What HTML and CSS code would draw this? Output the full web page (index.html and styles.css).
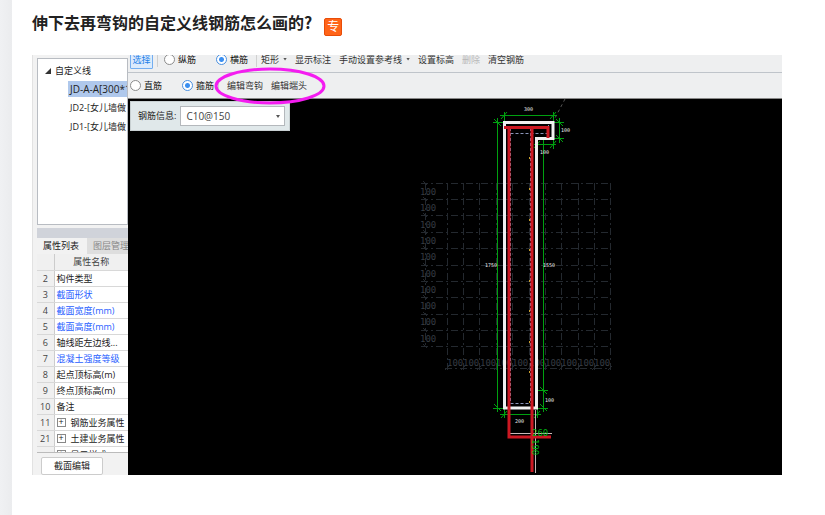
FILE: index.html
```html
<!DOCTYPE html>
<html lang="zh-CN">
<head>
<meta charset="utf-8">
<title>伸下去再弯钩的自定义线钢筋怎么画的？</title>
<link rel="stylesheet" href="styles.css">
</head>
<body>
<main class="page">
  <header class="question">
    <h1>伸下去再弯钩的自定义线钢筋怎么画的?</h1>
    <span class="badge">专</span>
  </header>
  <section class="app">
    <aside class="side">
      <div class="tree">
        <div class="tree-root"><svg class="caret" viewBox="0 0 6 6"><path d="M6 0V6H0Z"/></svg>自定义线</div>
        <ul>
          <li class="selected">JD-A-A[300*1</li>
          <li>JD2-[女儿墙做</li>
          <li>JD1-[女儿墙做</li>
        </ul>
      </div>
      <div class="band"></div>
      <div class="tabs"><button class="tab active">属性列表</button><button class="tab">图层管理</button></div>
      <div class="props">
        <table>
          <thead><tr><th></th><th>属性名称</th></tr></thead>
          <tbody>
            <tr><th>2</th><td>构件类型</td></tr>
            <tr class="blue"><th>3</th><td>截面形状</td></tr>
            <tr class="blue"><th>4</th><td>截面宽度(mm)</td></tr>
            <tr class="blue"><th>5</th><td>截面高度(mm)</td></tr>
            <tr><th>6</th><td>轴线距左边线...</td></tr>
            <tr class="blue"><th>7</th><td>混凝土强度等级</td></tr>
            <tr><th>8</th><td>起点顶标高(m)</td></tr>
            <tr><th>9</th><td>终点顶标高(m)</td></tr>
            <tr><th>10</th><td>备注</td></tr>
            <tr><th>11</th><td><span class="plus">+</span>钢筋业务属性</td></tr>
            <tr><th>21</th><td><span class="plus">+</span>土建业务属性</td></tr>
            <tr><th></th><td><span class="plus">+</span>显示样式</td></tr>
          </tbody>
        </table>
      </div>
      <div class="side-foot"><button class="edit">截面编辑</button></div>
    </aside>
    <div class="work">
      <div class="bar bar-top">
        <button class="pick">选择</button>
        <i class="sep"></i>
        <label class="first"><input type="radio" name="dir">纵筋</label>
        <label class="second"><input type="radio" name="dir" checked>横筋</label>
        <i class="sep"></i>
        <button>矩形<b class="drop"></b></button>
        <button>显示标注</button>
        <button>手动设置参考线<b class="drop"></b></button>
        <button>设置标高</button>
        <button disabled>删除</button>
        <button>清空钢筋</button>
      </div>
      <div class="bar bar-sub">
        <label><input type="radio" name="kind">直筋</label>
        <label class="second"><input type="radio" name="kind" checked>箍筋</label>
        <i class="sep"></i>
        <button>编辑弯钩</button>
        <button>编辑端头</button>
        <svg class="ring" viewBox="0 0 112 38"><ellipse cx="56" cy="19" rx="54" ry="17"/></svg>
      </div>
      <div class="canvas">
        <div class="info">
          <label for="rebar">钢筋信息:</label>
          <select id="rebar"><option>C10@150</option></select>
          <b class="drop"></b>
        </div>
        <svg class="drawing" viewBox="128 99 654 376" preserveAspectRatio="xMinYMin meet">
          <g class="grid">
            <path d="M421 183.500H611M421 199.500H611M421 215.500H611M421 232.500H611M421 248.500H611M421 265.500H611M421 281.500H611M421 297.500H611M421 314.500H611M421 330.500H611M421 346.500H611"/>
            <path d="M447.500 183V370M463.500 183V370M479.500 183V370M496.500 183V370M512.500 183V370M529.500 183V370M545.500 183V370M561.500 183V370M578.500 183V370M594.500 183V370M610.500 183V370M425.500 183V346M445 368.500H611"/>
            <path class="marks" d="M423 181l4 4M423 197l4 4M423 213l4 4M423 230l4 4M423 246l4 4M423 263l4 4M423 279l4 4M423 295l4 4M423 312l4 4M423 328l4 4M423 344l4 4M445 370l4-4M461 370l4-4M477 370l4-4M494 370l4-4M510 370l4-4M527 370l4-4M543 370l4-4M559 370l4-4M576 370l4-4M592 370l4-4M608 370l4-4"/>
          </g>
          <g class="grid-text">
            <text x="420" y="195">100</text><text x="420" y="211">100</text><text x="420" y="228">100</text><text x="420" y="244">100</text><text x="420" y="260">100</text><text x="420" y="277">100</text><text x="420" y="293">100</text><text x="420" y="309">100</text><text x="420" y="325">100</text><text x="420" y="342">100</text>
            <text x="447" y="366">100</text><text x="463" y="366">100</text><text x="480" y="366">100</text><text x="496" y="366">100</text><text x="512" y="366">100</text><text x="529" y="366">100</text><text x="545" y="366">100</text><text x="561" y="366">100</text><text x="578" y="366">100</text><text x="594" y="366">100</text>
          </g>
          <path class="ray" d="M565 99L555 118"/>
          <g class="dim">
            <path d="M504.500 112V122M553.500 112V122M500 115.500H557M493 122.500H504M497.500 118V412M493 408.500H504M553 122.500H564M559.500 118V143M553 138.500H564M537.500 139V149M553.500 139V149M534 144.500H556M543.500 139V412M537 390.500H548M537 408.500H548M504.500 408V418M537.500 408V418M500 414.500H541"/>
            <path d="M501 119l6-7M550 119l6-7M494 119l7 7M556 119l7 7M556 135l7 7M534 148l6-7M550 148l6-7M494 404l7 7M540 387l7 7M540 404l7 7M501 418l6-7M534 418l6-7"/>
          </g>
          <path class="cover" d="M510.500 133.500H548M510.500 128V403M510.500 403.500H532M530.500 128V403M548.500 125V134"/>
          <path class="cover-dots" d="M529.500 157v2M529.500 188v2M529.500 219v2M529.500 249v2M529.500 280v2M529.500 310v2M529.500 341v2M529.500 371v2M529.500 401v2"/>
          <path class="wall" d="M504.500 122.500H553V138.500H536.500V408H504.500Z"/>
          <path class="offset" d="M535.500 410V473M509 433.500H552"/>
          <path class="steel" d="M504 127.500H548V138M509 127V437H551M532 127V472"/>
          <g class="num"><text x="524" y="111">300</text><text x="561" y="132">100</text><text x="540" y="154">100</text><text x="485" y="267">1750</text><text x="543" y="267">1550</text><text x="545" y="402">100</text><text x="515" y="423">200</text></g>
          <g class="green-num"><text x="532" y="436">260</text><text transform="translate(532 439) rotate(90)">190</text></g>
        </svg>
      </div>
    </div>
  </section>
</main>
</body>
</html>
```
FILE: styles.css
```css
* { box-sizing: border-box; }
body {
  margin: 0;
  padding-left: 12px;
  background: linear-gradient(90deg, #f0f1f3 0, #ebecee 12px);
  font-family: "Open Sans", "Noto Sans CJK SC", sans-serif;
}
button, input, select { font: inherit; color: inherit; margin: 0; }
button { border: 0; padding: 0; background: none; white-space: nowrap; }
.page { min-height: 100vh; padding: 6px 43px 40px 20px; background: #fff; }
.question { display: flex; align-items: center; gap: 12px; height: 32px; margin-bottom: 17px; }
h1 { margin: 0; font: bold 16px/32px "Noto Sans CJK SC", sans-serif; color: #222; }
.badge {
  width: 18px; height: 18px; margin-top: 10px;
  border: 1px solid #e84c08; border-radius: 2px; background: #ff6418;
  color: #fff; font-size: 12px; line-height: 16px; text-align: center;
}
.app { display: flex; font-size: 9px; line-height: 16px; color: #222; }
.side {
  width: 96px; flex: none; height: 420px; overflow: hidden;
  display: flex; flex-direction: column;
  padding: 3px 0 0 4px; border-left: 1px solid #e2e2e2; background: #f2f2f2;
}
.tree { height: 167px; margin-bottom: 3px; padding-top: 4px; border: 1px solid #b8bcc2; background: #fff; overflow: hidden; }
.tree-root { display: flex; align-items: center; gap: 4px; padding-left: 7px; height: 16px; }
.caret { width: 6px; height: 6px; fill: #333; }
ul { list-style: none; margin: 2px 0 0 30px; padding: 0; }
li { height: 16px; margin-bottom: 3px; padding-left: 2px; white-space: nowrap; }
li.selected { background: #afc8ec; font-size: 10px; }
.band { height: 10px; flex: none; background: #d0d3da; }
.tabs { display: flex; height: 16px; flex: none; overflow: hidden; background: #dedede; }
.tab { flex: none; padding: 0 6px; color: #888; }
.tab.active { padding-right: 8px; background: #f2f2f2; color: #222; }
.props { flex: 1; overflow: hidden; border-bottom: 1px solid #bbb; }
table { width: 100%; border-collapse: collapse; table-layout: fixed; background: #fff; }
tr { height: 16px; }
th, td { height: 16px; padding: 0; border-bottom: 1px solid #d8d8d8; line-height: 15px; font-weight: 400; white-space: nowrap; overflow: hidden; }
th { background: #f0f0f0; color: #444; }
th:first-child { width: 17px; border-right: 1px solid #ccc; }
td { padding-left: 2px; }
.blue td { color: #2860ff; }
.plus { display: inline-block; width: 9px; height: 9px; margin-right: 5px; border: 1px solid #888; line-height: 6px; text-align: center; vertical-align: 1px; }
.side-foot { height: 22px; flex: none; padding: 4px 4px 0; }
.edit { width: 62px; height: 18px; border: 1px solid #ccc; border-radius: 2px; background: #fff; }
.work { flex: 1; min-width: 0; display: flex; flex-direction: column; }
.bar { position: relative; display: flex; align-items: center; gap: 8px; background: #eeeff0; color: #333; white-space: nowrap; }
.bar-top { height: 18px; padding: 0 2px 8px; border-bottom: 1px solid #bfc4ca; overflow: hidden; }
.bar-sub { height: 26px; padding-left: 2px; border-bottom: 1px solid #888; }
.bar .pick { width: 23px; height: 19px; border: 1px solid #74aef0; border-radius: 1px; background: #dcebfc; color: #2480e8; }
.bar button:disabled { color: #b8b8b8; }
.bar label { display: flex; align-items: center; gap: 3px; color: #111; }
.bar .second { margin-left: 12px; }
.bar .first { margin-left: 2px; }
.bar .sep { flex: none; width: 1px; height: 14px; margin: 0 -4px; background: #d0d0d0; }
.bar-sub .sep { margin: 0 0 0 -4px; }
.bar-top .second + .sep { margin: 0 -4px 0 0; }
input[type="radio"] { appearance: none; width: 11px; height: 11px; border: 1px solid #8c8c8c; border-radius: 50%; background: #fff; }
input[type="radio"]:checked { border-color: #4a90e0; background: radial-gradient(circle, #3b8ff0 0 2px, #fff 3px); }
.drop { display: inline-block; width: 4px; height: 3px; margin-left: 4px; background: #555; clip-path: polygon(0 0, 100% 0, 50% 100%); vertical-align: 2px; }
.ring { position: absolute; left: 86px; top: -6px; width: 112px; height: 38px; z-index: 2; fill: none; stroke: #f41cf0; stroke-width: 3; }
.canvas { position: relative; flex: 1; background: #000; overflow: hidden; }
.drawing { display: block; width: 100%; height: auto; fill: none; }
.info { position: absolute; left: 2px; top: 2px; display: flex; align-items: center; gap: 4px; width: 160px; height: 30px; padding: 0 4px 0 7px; border: 1px solid #c8d0d2; background: #e0e8ea; }
.info label { flex: none; }
.info select { flex: 1; min-width: 0; height: 20px; padding: 0 5px; appearance: none; border: 1px solid #b4b8bc; border-radius: 0; background: #fff; font-size: 10px; color: #444; }
.info .drop { position: absolute; right: 9px; top: 13px; }
.grid { stroke: #24292f; stroke-dasharray: 7 3 2 3; }
.grid .marks { stroke-dasharray: none; }
.grid-text { fill: #353b42; font: 9px "DejaVu Sans Mono", monospace; }
.ray { stroke: #555; stroke-dasharray: 3 3; }
.dim { stroke: #00a010; }
.wall { stroke: #f0f0f0; stroke-width: 3; }
.cover { stroke: #8a94b8; stroke-dasharray: 3 2; }
.cover-dots { stroke: #c8a030; }
.steel { stroke: #cc1822; stroke-width: 3; }
.offset { stroke: #c8b8b8; }
.num { fill: #eee; font: 5px "DejaVu Sans Mono", monospace; }
.green-num { fill: #00b414; font: 9px "DejaVu Sans Mono", monospace; }
```
